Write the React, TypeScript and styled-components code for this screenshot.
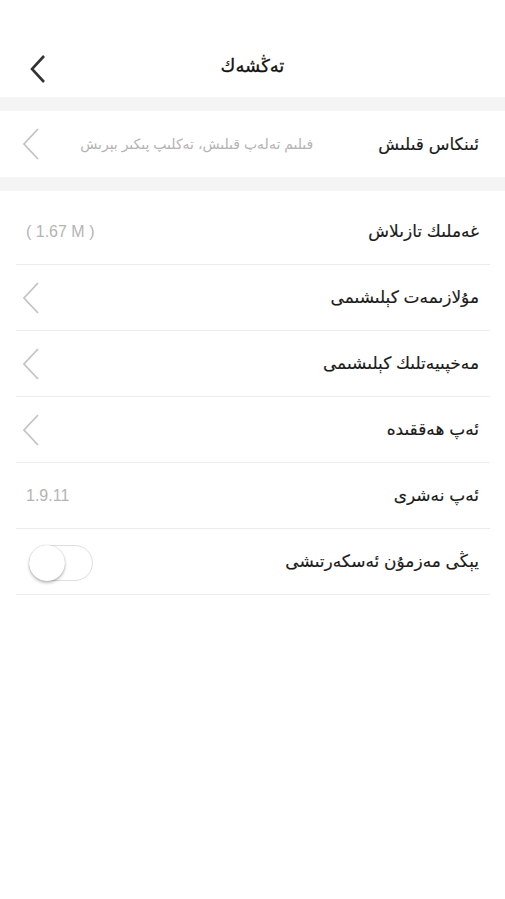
import styled, { createGlobalStyle } from "styled-components";

const GlobalStyle = createGlobalStyle`
  html, body {
    margin: 0;
    padding: 0;
    background: #ffffff;
  }
  body {
    font-family: "Liberation Sans", "DejaVu Sans", sans-serif;
    color: #222222;
  }
  * {
    box-sizing: border-box;
  }
`;

const Chevron = ({ light }: { light?: boolean }) => (
  <svg
    width={light ? 18 : 20}
    height={light ? 34 : 30}
    viewBox={light ? "0 0 18 34" : "0 0 20 30"}
    fill="none"
  >
    {light ? (
      <path d="M16 2 L2 17 L16 32" stroke="#c4c4c4" strokeWidth="1.8" />
    ) : (
      <path d="M15 2 L3 15 L15 28" stroke="#333333" strokeWidth="2.6" />
    )}
  </svg>
);

type Item = {
  label: string;
  value?: string;
  arrow?: boolean;
  toggle?: boolean;
};

const items: Item[] = [
  { label: "غەملىك تازىلاش", value: "( 1.67 M )" },
  { label: "مۇلازىمەت كېلىشىمى", arrow: true },
  { label: "مەخپىيەتلىك كېلىشىمى", arrow: true },
  { label: "ئەپ ھەققىدە", arrow: true },
  { label: "ئەپ نەشرى", value: "1.9.11" },
  { label: "يېڭى مەزمۇن ئەسكەرتىشى", toggle: true },
];

export default function App() {
  return (
    <Page dir="rtl">
      <GlobalStyle />
      <Header>
        <Title>تەڭشەك</Title>
        <BackButton>
          <Chevron />
        </BackButton>
      </Header>
      <Band />
      <FeedbackRow>
        <Label>ئىنكاس قىلىش</Label>
        <Hint>فىلىم تەلەپ قىلىش، تەكلىپ پىكىر بېرىش</Hint>
        <ArrowBox>
          <Chevron light />
        </ArrowBox>
      </FeedbackRow>
      <Band />
      <List>
        {items.map((item) => (
          <Row key={item.label}>
            <Label>{item.label}</Label>
            {item.value && <Value>{item.value}</Value>}
            {item.arrow && (
              <ArrowBox>
                <Chevron light />
              </ArrowBox>
            )}
            {item.toggle && (
              <Switch>
                <Knob />
              </Switch>
            )}
          </Row>
        ))}
      </List>
    </Page>
  );
}

const Page = styled.div`
  width: 505px;
  min-height: 899px;
  background: #ffffff;
`;

const Header = styled.header`
  position: relative;
  height: 97px;
  padding-top: 34px;
  display: flex;
  align-items: center;
  justify-content: center;
`;

const Title = styled.h1`
  margin: 0;
  font-size: 18px;
  font-weight: normal;
  color: #111111;
  -webkit-text-stroke: 0.3px #111111;
`;

const BackButton = styled.div`
  position: absolute;
  left: 29px;
  top: 54px;
  display: flex;
`;

const Band = styled.div`
  height: 14px;
  background: #f4f4f4;
`;

const FeedbackRow = styled.div`
  height: 66px;
  display: flex;
  align-items: center;
  padding: 0 26px 0 22px;
`;

const Label = styled.span`
  font-size: 17px;
  color: #1a1a1a;
  white-space: nowrap;
  -webkit-text-stroke: 0.15px #1a1a1a;
`;

const Hint = styled.span`
  font-size: 14px;
  color: #b4b4b4;
  white-space: nowrap;
  margin-right: 65px;
`;

const ArrowBox = styled.span`
  margin-right: auto;
  display: flex;
  align-items: center;
`;

const List = styled.div`
  padding: 8px 15px 0 16px;
`;

const Row = styled.div`
  height: 66px;
  display: flex;
  align-items: center;
  justify-content: space-between;
  padding: 0 11px 0 6px;
  border-bottom: 1px solid #ececec;
`;

const Value = styled.span`
  font-size: 16px;
  color: #b4b4b4;
  direction: ltr;
  margin-left: 4px;
`;

const Switch = styled.span`
  position: relative;
  width: 64px;
  height: 36px;
  border-radius: 18px;
  border: 1px solid #dedede;
  background: #ffffff;
  margin-left: 7px;
  margin-top: 2px;
`;

const Knob = styled.span`
  position: absolute;
  left: -1px;
  top: -1px;
  width: 36px;
  height: 36px;
  border-radius: 50%;
  background: #ffffff;
  box-shadow: 0 2px 3px rgba(0, 0, 0, 0.25), 0 0 1px rgba(0, 0, 0, 0.3);
`;
